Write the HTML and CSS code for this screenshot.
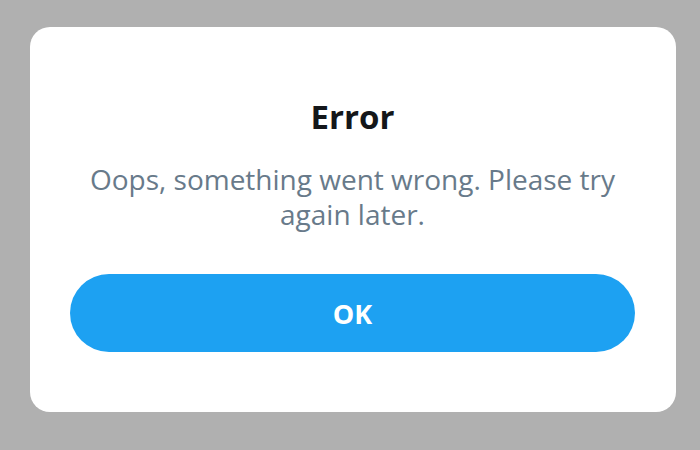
FILE: index.html
```html
<!DOCTYPE html>
<html>
<head>
<meta charset="utf-8">
<link rel="stylesheet" href="styles.css">
</head>
<body>
<div class="dialog">
  <h1 class="title">Error</h1>
  <p class="message">Oops, something went wrong. Please try again later.</p>
  <button class="ok">OK</button>
</div>
</body>
</html>
```
FILE: styles.css
```css
html, body {
  margin: 0;
  padding: 0;
  background: #b0b0b0;
  height: 100%;
}
body {
  font-family: "Open Sans", "Noto Sans", sans-serif;
  padding-top: 27px;
  padding-left: 30px;
  box-sizing: border-box;
}
.dialog {
  width: 646px;
  height: 385px;
  box-sizing: border-box;
  background: #fff;
  border-radius: 20px;
  padding: 0 41px 0 40px;
  display: flex;
  flex-direction: column;
  align-items: stretch;
}
.title {
  margin: 70px 0 0;
  font-size: 33px;
  font-weight: 700;
  line-height: 40px;
  color: #14171a;
  text-align: center;
}
.message {
  margin: 25px 0 0;
  font-size: 28px;
  line-height: 35px;
  color: #687a8a;
  text-align: center;
}
.ok {
  margin-top: 42px;
  height: 78px;
  border: none;
  border-radius: 39px;
  background: #1da1f2;
  color: #fff;
  font-family: inherit;
  font-size: 27px;
  font-weight: 700;
  padding: 0;
}
```
